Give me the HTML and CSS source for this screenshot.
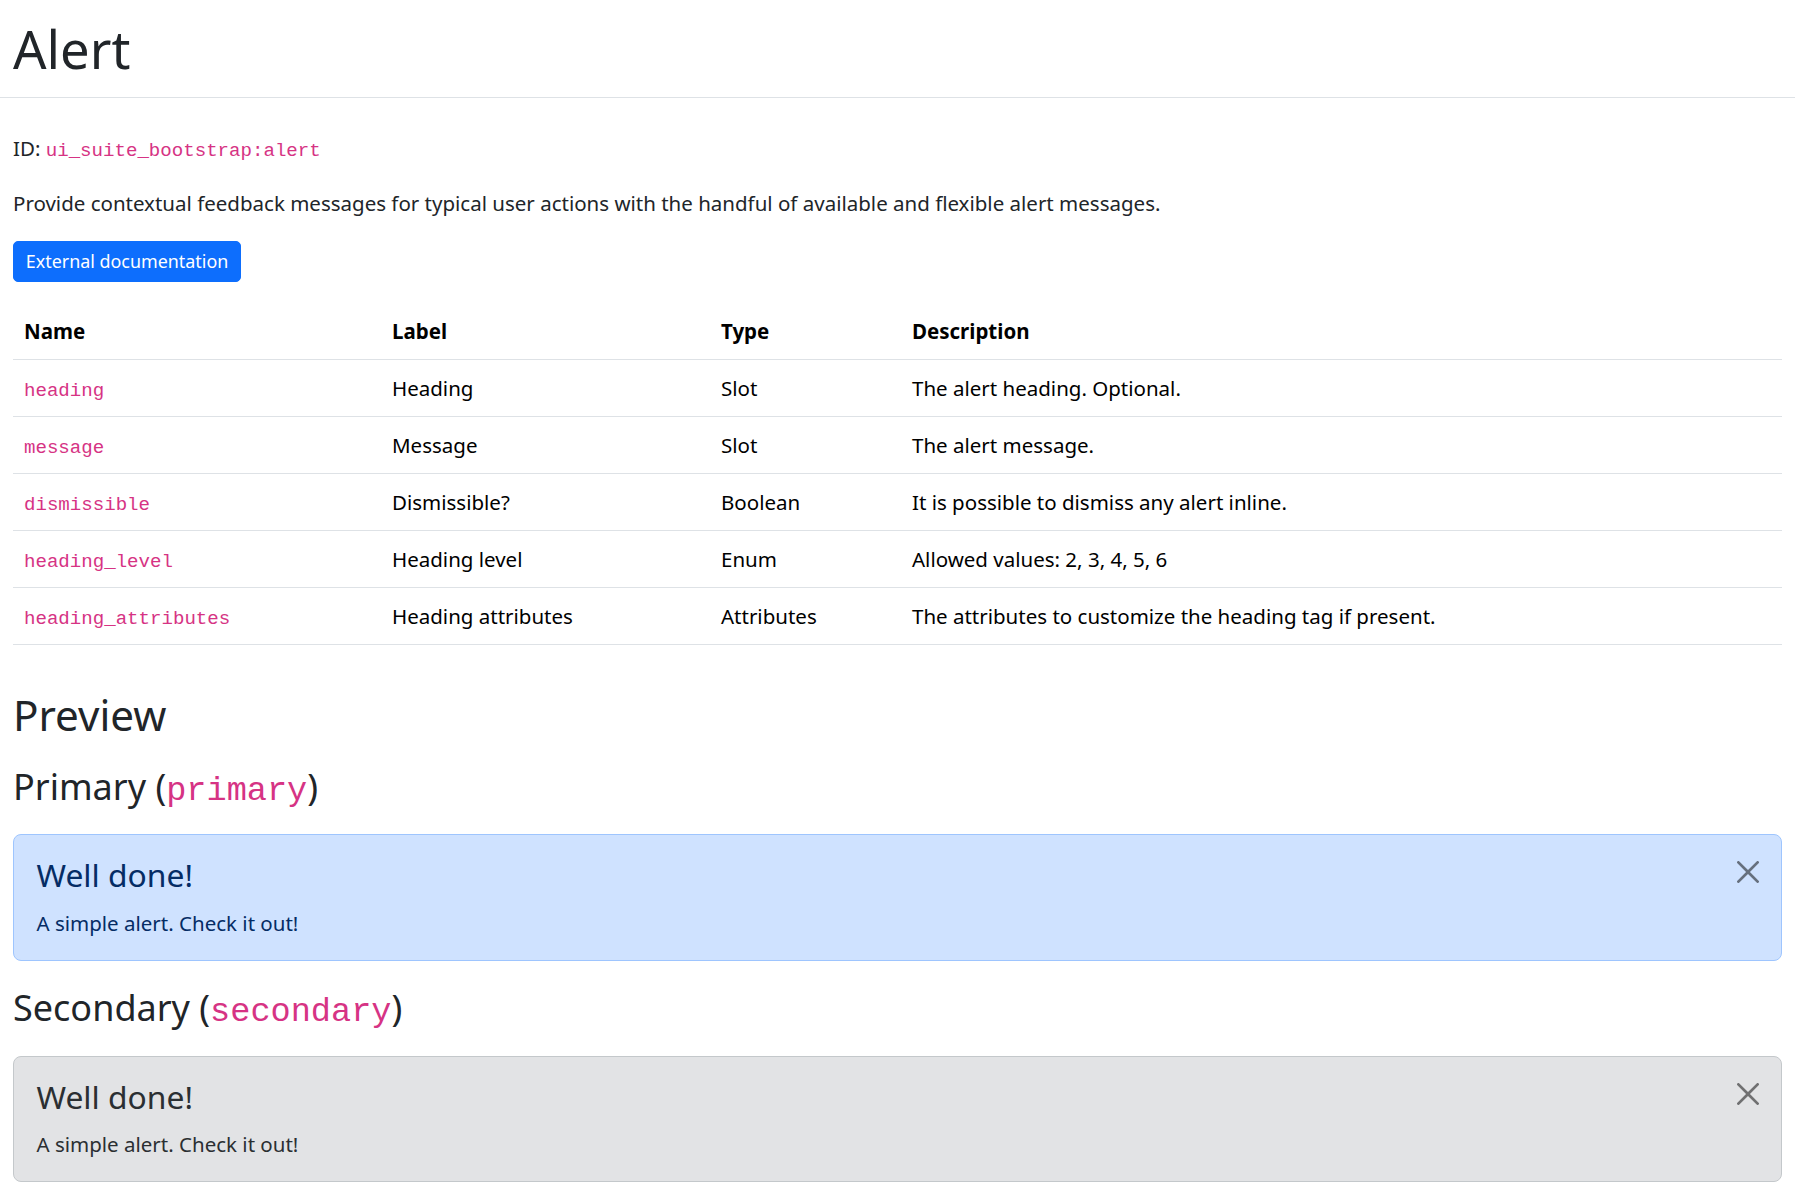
FILE: index.html
```html
<!DOCTYPE html>
<html lang="en">
<head>
<meta charset="utf-8">
<title>Alert</title>
<link rel="stylesheet" href="styles.css">
</head>
<body>
<header class="page-header">
  <h1 class="page-title">Alert</h1>
</header>
<main class="content">
  <p class="meta">ID: <code>ui_suite_bootstrap:alert</code></p>
  <p class="summary">Provide contextual feedback messages for typical user actions with the handful of available and flexible alert messages.</p>
  <div class="actions"><a class="btn btn-primary" href="#">External documentation</a></div>

  <table class="props">
    <colgroup>
      <col class="col-name">
      <col class="col-label">
      <col class="col-type">
      <col class="col-desc">
    </colgroup>
    <thead>
      <tr><th>Name</th><th>Label</th><th>Type</th><th>Description</th></tr>
    </thead>
    <tbody>
      <tr><td><code>heading</code></td><td>Heading</td><td>Slot</td><td>The alert heading. Optional.</td></tr>
      <tr><td><code>message</code></td><td>Message</td><td>Slot</td><td>The alert message.</td></tr>
      <tr><td><code>dismissible</code></td><td>Dismissible?</td><td>Boolean</td><td>It is possible to dismiss any alert inline.</td></tr>
      <tr><td><code>heading_level</code></td><td>Heading level</td><td>Enum</td><td>Allowed values: 2, 3, 4, 5, 6</td></tr>
      <tr><td><code>heading_attributes</code></td><td>Heading attributes</td><td>Attributes</td><td>The attributes to customize the heading tag if present.</td></tr>
    </tbody>
  </table>

  <h2 class="section-title">Preview</h2>

  <h3 class="variant-title">Primary (<code>primary</code>)</h3>
  <div class="alert alert-primary" role="alert">
    <h4 class="alert-heading">Well done!</h4>
    <p class="alert-text">A simple alert. Check it out!</p>
    <button type="button" class="btn-close" aria-label="Close">
      <svg viewBox="0 0 16 16" width="22" height="22" aria-hidden="true"><path d="M.293.293a1 1 0 0 1 1.414 0L8 6.586 14.293.293a1 1 0 1 1 1.414 1.414L9.414 8l6.293 6.293a1 1 0 0 1-1.414 1.414L8 9.414l-6.293 6.293a1 1 0 0 1-1.414-1.414L6.586 8 .293 1.707a1 1 0 0 1 0-1.414"/></svg>
    </button>
  </div>

  <h3 class="variant-title">Secondary (<code>secondary</code>)</h3>
  <div class="alert alert-secondary" role="alert">
    <h4 class="alert-heading">Well done!</h4>
    <p class="alert-text">A simple alert. Check it out!</p>
    <button type="button" class="btn-close" aria-label="Close">
      <svg viewBox="0 0 16 16" width="22" height="22" aria-hidden="true"><path d="M.293.293a1 1 0 0 1 1.414 0L8 6.586 14.293.293a1 1 0 1 1 1.414 1.414L9.414 8l6.293 6.293a1 1 0 0 1-1.414 1.414L8 9.414l-6.293 6.293a1 1 0 0 1-1.414-1.414L6.586 8 .293 1.707a1 1 0 0 1 0-1.414"/></svg>
    </button>
  </div>
</main>
</body>
</html>
```
FILE: styles.css
```css
html, body {
  margin: 0;
  padding: 0;
  background: #fff;
}

body {
  font-family: "Noto Sans", "Open Sans", sans-serif;
  font-size: 20.5px;
  line-height: 30.6px;
  color: #212529;
}

code {
  font-family: "Liberation Mono", "DejaVu Sans Mono", monospace;
  font-size: 19.1px;
  line-height: 1;
  color: #d63384;
}

.page-header {
  padding: 18px 13px 16.6px;
  border-bottom: 1px solid #dee2e6;
}

.page-title {
  margin: 0;
  font-size: 52.5px;
  font-weight: 400;
  line-height: 62.4px;
}

.content {
  padding: 0 13px;
}

.meta {
  margin: 34.5px 0 0;
}

.summary {
  margin: 24.7px 0 0;
}

.actions {
  display: flex;
  margin-top: 22.9px;
}

.btn {
  display: inline-block;
  font-size: 17.9px;
  line-height: 26.8px;
  padding: 6.2px 11.8px;
  border: 1px solid transparent;
  border-radius: 5px;
  text-decoration: none;
}

.btn-primary {
  background: #0d6efd;
  border-color: #0d6efd;
  color: #fff;
}

/* Table */
.props {
  width: 100%;
  margin-top: 20.6px;
  border-collapse: collapse;
  table-layout: fixed;
  color: #000;
}

.col-name { width: 368px; }
.col-label { width: 329px; }
.col-type { width: 191px; }

.props th,
.props td {
  padding: 12.7px 10.2px 12.7px 11px;
  text-align: left;
  vertical-align: top;
  border-bottom: 1px solid #dee2e6;
}

.props th {
  font-weight: 700;
}

/* Preview */
.section-title {
  margin: 45.5px 0 0;
  font-size: 42.2px;
  font-weight: 400;
  line-height: 49.7px;
}

.variant-title {
  margin: 24.5px 0 0;
  font-size: 36px;
  font-weight: 400;
  line-height: 43.2px;
}

.variant-title code {
  font-size: 33.6px;
}

.alert {
  position: relative;
  margin-top: 26.2px;
  padding: 21px 22.5px 21.6px;
  border: 1px solid transparent;
  border-radius: 8px;
}

.alert-primary {
  background: #cfe2ff;
  border-color: #9ec5fe;
  color: #052c65;
}

.alert-secondary {
  background: #e2e3e5;
  border-color: #c4c8cb;
  color: #2b2f32;
}

.alert-heading {
  margin: 0 0 13.8px;
  font-size: 31.8px;
  font-weight: 400;
  line-height: 37.9px;
  color: inherit;
}

.alert-text {
  margin: 0;
}

.btn-close {
  position: absolute;
  top: 26px;
  right: 22.5px;
  width: 22px;
  height: 22px;
  padding: 0;
  border: 0;
  background: transparent;
  cursor: pointer;
  opacity: 0.5;
}

.btn-close svg {
  display: block;
  fill: #000;
}
```
